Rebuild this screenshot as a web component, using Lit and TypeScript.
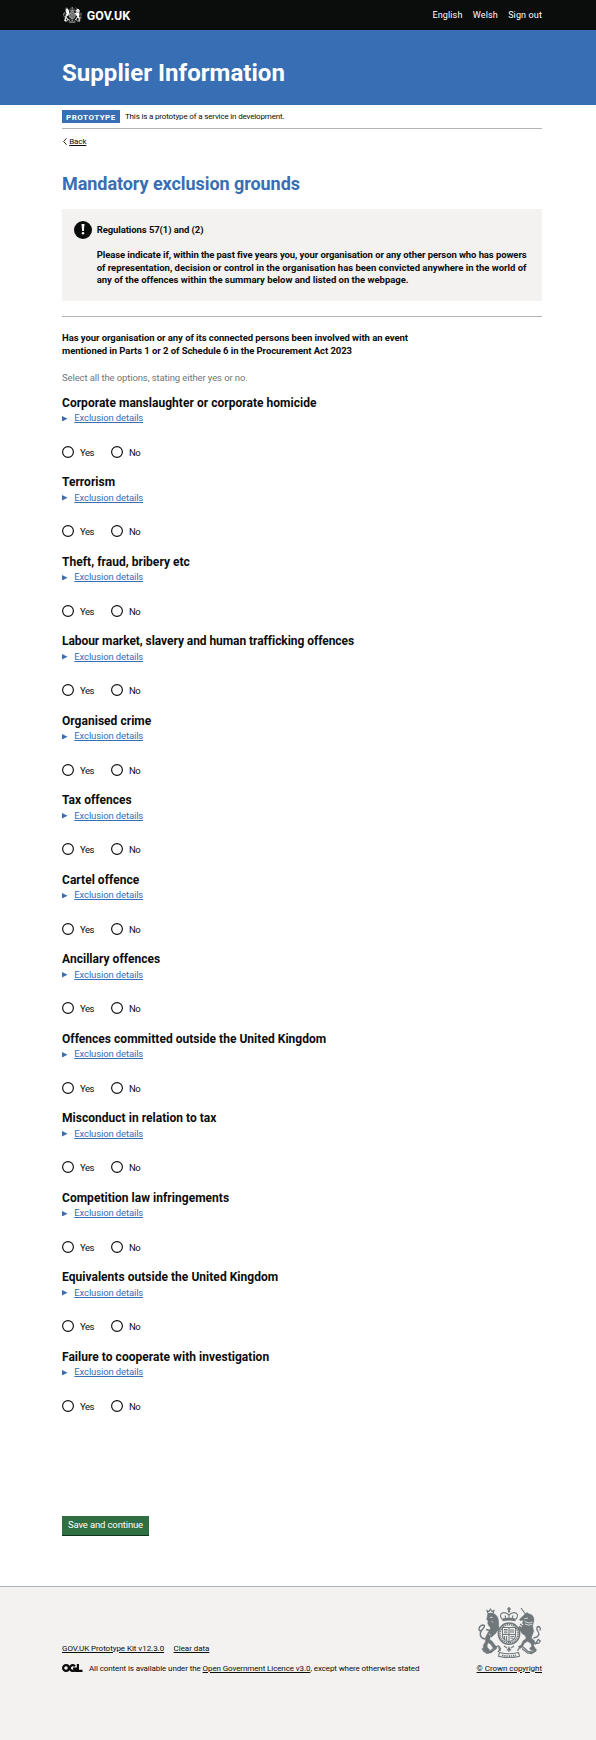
import { LitElement, html, css, svg } from "lit";
import { customElement } from "lit/decorators.js";

const grounds = [
  "Corporate manslaughter or corporate homicide",
  "Terrorism",
  "Theft, fraud, bribery etc",
  "Labour market, slavery and human trafficking offences",
  "Organised crime",
  "Tax offences",
  "Cartel offence",
  "Ancillary offences",
  "Offences committed outside the United Kingdom",
  "Misconduct in relation to tax",
  "Competition law infringements",
  "Equivalents outside the United Kingdom",
  "Failure to cooperate with investigation",
];

const lion = svg`
  <path d="M9 3.500l1 3h5l1-3-2 1-1.500-2.500-1.500 2.500z" fill="none" stroke="currentColor" stroke-width="1.100"/>
  <path d="M9.500 7.500c1.500-1.500 5-1.600 7-.4 2.600 1.400 3.700 4 4 7 .3 3-.2 5.500.8 7.400l-1.200 1.700-1.500 1.700-1.300 1.800-2.400 1.200-2.600 1.900-.6 2.600 2.200 1.600 2.400 3.200 2.700 3.400-1.700 1.500-2.700-1.700-1.600-3-2.600-1.700-1.200 2 .1 2.700 2.200 2.300-.2 2.200-3.800-.2-2.300-2.500.2-4 2.100-3.800-.2-3.500 2.100-4.300 2.300-3.400.8-2.600-1.600-1.600-1.200-2.800.4-2.300-1.600-1.700.6-1.500z" fill="currentColor" stroke="currentColor" stroke-width=".5"/>
  <path d="M16 22l-4.500 1.500-3.500-1M17 26l-4 4M7 32c-5-1-6-5-3.500-8.500C5 21.500 7 20 6.500 18.500 4.500 17 1 19 1 22c0 1.800 1 2 2.400 1.400" fill="none" stroke="currentColor" stroke-width="1.400"/>
  <path d="M12 10.500l2.500-.2M13.500 14l1.500 1.500M11 27l1.500 1" stroke="var(--crest-gap)" stroke-width=".8"/>`;

const unicorn = svg`
  <path d="M43 1l4.800 6.500" stroke="currentColor" stroke-width="1.100" fill="none"/>
  <path d="M47 7l2.500-1.600 1 1.300c3.700.5 5.500 3 5.500 6.200 0 2.200-1 3.600-1.300 5.200-.4 1.900 1 4.100 1 6.500l-1.400 3.300-.9 3.200 3.400 3-1.200 4.300 2.200 3.800-2.300 1.900-3-1-.9-2 2-1.700-.5-2.700-3.500-2.400-3.300 2-1.800 3.700-2.900 1.700-1.200-2.300 2.800-1.500 1.600-3.800 3.300-2.600-.8-2.800-3.300-2.300-1.600-2.300-2.300-2.200 1-2.800 2.700 1.200 1.700-2.800-1.200-1.500 1-3-3 .8-1-1.300z" fill="currentColor" stroke="currentColor" stroke-width=".4"/>
  <path d="M42 17l4 3M55.500 31c5-.5 6.500-3.500 4.500-6.500-1.800-2.500-1.500-4.500.3-5 2 .2 2.400 2.500 1.700 4M52 34l6 2.500 3-.5 1.200-2-2-1.500-1.500 2.500-2 2.500" fill="none" stroke="currentColor" stroke-width="1.300"/>
  <path d="M46.500 14.500l5 1.500 3-1M47 17l4 1.200 3-1M46 12l4-1" fill="none" stroke="var(--crest-gap)" stroke-width=".8"/>`;

const crown = svg`
  <path d="M31 0v4M29.200 2h3.600" stroke="currentColor" stroke-width="1.400"/>
  <circle cx="31" cy="4.400" r="1.200" fill="currentColor"/>
  <path d="M24.500 12.500C21 9 22.500 5.500 26 5.600c2.200.1 3.800 1.200 5 2.400 1.200-1.200 2.800-2.300 5-2.400 3.500-.1 5 3.400 1.500 6.900M31 7v5M27 8.500l1 3.500M35 8.500l-1 3.500" fill="none" stroke="currentColor" stroke-width="1.100"/>
  <path d="M24.500 11.600q6.500-1.600 13 0v2.600q-6.500-1.600-13 0z" fill="currentColor"/>`;

const shield = svg`
  <circle cx="31" cy="26.700" r="10.600" fill="var(--crest-gap)" stroke="currentColor" stroke-width="1.500"/>
  <circle cx="31" cy="26.700" r="9" fill="none" stroke="currentColor" stroke-width="1.500" stroke-dasharray="1.300 .7"/>
  <path d="M24.500 20.500h13v8c0 3-3 5.200-6.500 6.500-3.500-1.300-6.500-3.500-6.500-6.500z" fill="none" stroke="currentColor" stroke-width="1.100"/>
  <path d="M31 20.500V35M24.500 27.500h13M26 22.500h3.500M26 24h3.500M26 25.700h3.500M32.500 29.500h3.500M32.500 31.200h2.500M26.500 29v3M28.500 29v4M33 22v4M35 22v4" stroke="currentColor" stroke-width="1.100"/>`;

const ribbon = svg`
  <path d="M4 41.500l3 3.500 5-.5 5-4.500 3.500-1 2 2.500-2.500 3.500M42 39l3.500 1.200 4.500 4.300 5 .7 3.500-3M5 43.500l4 2.800 4-1 5.500-4.300M44 41.500l5.500 4.500 4 .5 5-3" fill="none" stroke="currentColor" stroke-width="1.300"/>
  <path d="M21.500 45.500q9.500 2.500 19 0l1 3.700q-10.500 3-21 0zM22.500 44l-2-3.500M39.500 44l2-3.500" fill="none" stroke="currentColor" stroke-width="1.100"/>
  <path d="M24 48.300q7 1.600 14 0" fill="none" stroke="currentColor" stroke-width="1.600" stroke-dasharray="1.400 .8"/>
  <path d="M31 39.500v5.500M29.500 43l1.500-2.500 1.500 2.500zM26 39l3 2M36 39l-3 2" fill="none" stroke="currentColor" stroke-width="1.100"/>`;

@customElement("royal-crest")
class RoyalCrest extends LitElement {
  static styles = css`
    :host { display: block; }
    svg { display: block; width: 100%; height: 100%; }
  `;
  render() {
    return html`<svg viewBox="0 0 64 51" preserveAspectRatio="none" aria-hidden="true">
      ${lion}${unicorn}${crown}${shield}${ribbon}
    </svg>`;
  }
}

@customElement("exclusion-question")
class ExclusionQuestion extends LitElement {
  static properties = { heading: {} };
  declare heading: string;
  static styles = css`
    :host { display: block; height: 62.5px; margin-bottom: 17px; }
    h2 { margin: 0; font-size: 12px; line-height: 15px; font-weight: 700; letter-spacing: 0.03px; white-space: nowrap; }
    .long { letter-spacing: -0.06px; }
    .details { display: flex; align-items: center; margin-top: 1.6px; height: 12.5px; color: #386eb4; }
    .arrow { width: 5.5px; height: 5.5px; margin-right: 6.8px; fill: #386eb4; }
    .link { line-height: 12.5px; letter-spacing: -0.125px; text-decoration: underline; text-decoration-thickness: 1px; text-underline-offset: 1px; }
    .radios { display: flex; margin-top: 21.4px; }
    label { display: flex; align-items: center; height: 12px; width: 49px; letter-spacing: -0.45px; }
    .ring { width: 12px; height: 12px; margin-right: 6px; fill: #fff; stroke: #0b0c0c; stroke-width: 1.15; }
    .choice { line-height: 12px; padding-top: 2px; }
  `;
  render() {
    return html`
      <h2 class=${this.heading.length > 50 ? "long" : ""}>${this.heading}</h2>
      <div class="details">
        <svg class="arrow" viewBox="0 0 6 6"><path d="M0 0l6 3-6 3z"/></svg>
        <span class="link">Exclusion details</span>
      </div>
      <div class="radios">
        ${["Yes", "No"].map((c) => html`<label><svg class="ring" viewBox="0 0 12 12"><circle cx="6" cy="6" r="5.400"/></svg><span class="choice">${c}</span></label>`)}
      </div>`;
  }
}

@customElement("app-root")
class AppRoot extends LitElement {
  static styles = css`
    :host { display: flex; flex-direction: column; min-height: 1740px; background: #fff; color: #0b0c0c;
      font-family: Roboto, "Liberation Sans", sans-serif; font-size: 9.5px; line-height: 12.5px; }
    .wrap { width: 480px; margin: 0 54px 0 62px; }
    .top { background: #0b0c0c; color: #fff; }
    .bar { display: flex; align-items: center; height: 30px; }
    .mark { width: 19px; height: 16px; --crest-gap: #0b0c0c; margin-left: 0.700px; }
    .brand { font-size: 12.4px; font-weight: 700; line-height: 14px; margin-left: 5px; padding-top: 1px; letter-spacing: 0.05px; }
    .nav { display: flex; gap: 10.3px; margin-left: auto; font-size: 9px; letter-spacing: 0.13px; }
    .masthead { background: #386eb4; color: #fff; height: 75px; }
    .service { padding-top: 31px; font-size: 24px; line-height: 24px; font-weight: 700; letter-spacing: 0.04px; }
    .phase { display: flex; align-items: center; padding: 5px 0; height: 13px; border-bottom: 1px solid #b1b4b6; font-size: 8px; letter-spacing: -0.16px; }
    .stage { padding-top: 1px; }
    .tag { box-sizing: border-box; width: 58px; height: 13px; padding: 1px 0 0 4px; background: #386eb4; color: #fff; font-weight: 700; line-height: 13px; letter-spacing: 0.5px; margin-right: 5px; }
    .back { display: flex; align-items: center; margin-top: 6.5px; height: 12px; font-size: 8px; line-height: 12px; letter-spacing: -0.1px; }
    .chevron { width: 4px; height: 7px; margin: 0 2.500px 0 0.700px; fill: none; stroke: #0b0c0c; stroke-width: 0.9; }
    .u { text-decoration: underline; text-decoration-thickness: 1px; text-underline-offset: 1px; }
    h1 { margin: 26.5px 0 15px; font-size: 18px; line-height: 20px; color: #386eb4; letter-spacing: -0.06px; }
    .warning { box-sizing: border-box; display: flex; height: 92px; padding: 12px; background: #f3f2f1; font-weight: 700; letter-spacing: -0.085px; }
    .bang { width: 18px; height: 18px; margin-right: 4.700px; flex: none; }
    .copy { padding-top: 3px; }
    .copy p { margin: 0 0 12.5px; white-space: nowrap; }
    .mid { letter-spacing: -0.02px; }
    .rule { border: 0; border-top: 1px solid #b1b4b6; height: 0; margin: 15px 0; }
    .question { margin: 0; font-weight: 700; letter-spacing: -0.06px; }
    .hint { margin: 14.5px 0 11.5px; color: #6f777b; letter-spacing: -0.11px; }
    .save { display: block; box-sizing: border-box; width: 87px; height: 20px; margin: 104px 0 50px; padding: 0 0 2px; border: 0; border-bottom: 1px solid #0d331c; background: #306f41; color: #fff; font: inherit; line-height: 17px; letter-spacing: -0.14px; }
    .foot { flex: 1; border-top: 1px solid #b1b4b6; background: #f3f2f1; font-size: 8px; line-height: 12px; letter-spacing: -0.1px; }
    .cols { display: flex; justify-content: space-between; padding-top: 20px; }
    .meta { padding-top: 35.5px; }
    .links { display: flex; gap: 9.5px; letter-spacing: -0.05px; }
    .licence { display: flex; align-items: center; margin-top: 8px; }
    .ogl { width: 20.5px; height: 8px; margin: -1px 6.500px 0 0; }
    .rights { display: flex; flex-direction: column; align-items: flex-end; letter-spacing: -0.05px; }
    .arms { width: 64px; height: 51px; color: #6f777b; --crest-gap: #f3f2f1; }
    .crown { margin-top: 4.5px; }
  `;
  render() {
    return html`
      <header class="top">
        <div class="wrap bar">
          <royal-crest class="mark"></royal-crest>
          <span class="brand">GOV.UK</span>
          <nav class="nav"><span>English</span><span>Welsh</span><span>Sign out</span></nav>
        </div>
      </header>
      <div class="masthead"><div class="wrap service">Supplier Information</div></div>
      <main class="wrap">
        <div class="phase"><span class="tag">PROTOTYPE</span><span class="stage">This is a prototype of a service in development.</span></div>
        <div class="back"><svg class="chevron" viewBox="0 0 4 7"><path d="M3.500 .3L.7 3.500l2.800 3.200"/></svg><span class="u">Back</span></div>
        <h1>Mandatory exclusion grounds</h1>
        <section class="warning">
          <svg class="bang" viewBox="0 0 18 18"><circle cx="9" cy="9" r="9" fill="#0b0c0c"/><path d="M7.500 3h3l-.6 7H8.100z" fill="#fff"/><circle cx="9" cy="12.200" r="1.250" fill="#fff"/></svg>
          <div class="copy">
            <p>Regulations 57(1) and (2)</p>
            <p>Please indicate if, within the past five years you, your organisation or any other person who has powers<br><span class="mid">of representation, decision or control in the organisation has been convicted anywhere in the world of<br>any of the offences within the summary below and listed on the webpage.</span></p>
          </div>
        </section>
        <hr class="rule">
        <p class="question">Has your organisation or any of its connected persons been involved with an event<br>mentioned in Parts 1 or 2 of Schedule 6 in the Procurement Act 2023</p>
        <p class="hint">Select all the options, stating either yes or no.</p>
        ${grounds.map((g) => html`<exclusion-question .heading=${g}></exclusion-question>`)}
        <button class="save">Save and continue</button>
      </main>
      <footer class="foot">
        <div class="wrap cols">
          <div class="meta">
            <div class="links"><span class="u">GOV.UK Prototype Kit v12.3.0</span><span class="u">Clear data</span></div>
            <div class="licence">
              <svg class="ogl" viewBox="0 0 20.500 8" fill="none" stroke="#0b0c0c" stroke-width="2.200"><circle cx="4" cy="4" r="2.900"/><path d="M13 2.200A2.900 2.900 0 1 0 13 5.900M11 4.500h2.700V8M15.900 0v6.900h4.600"/></svg>
              <span>All content is available under the <span class="u">Open Government Licence v3.0</span>, except where otherwise stated</span>
            </div>
          </div>
          <div class="rights"><royal-crest class="arms"></royal-crest><span class="u crown">© Crown copyright</span></div>
        </div>
      </footer>`;
  }
}
